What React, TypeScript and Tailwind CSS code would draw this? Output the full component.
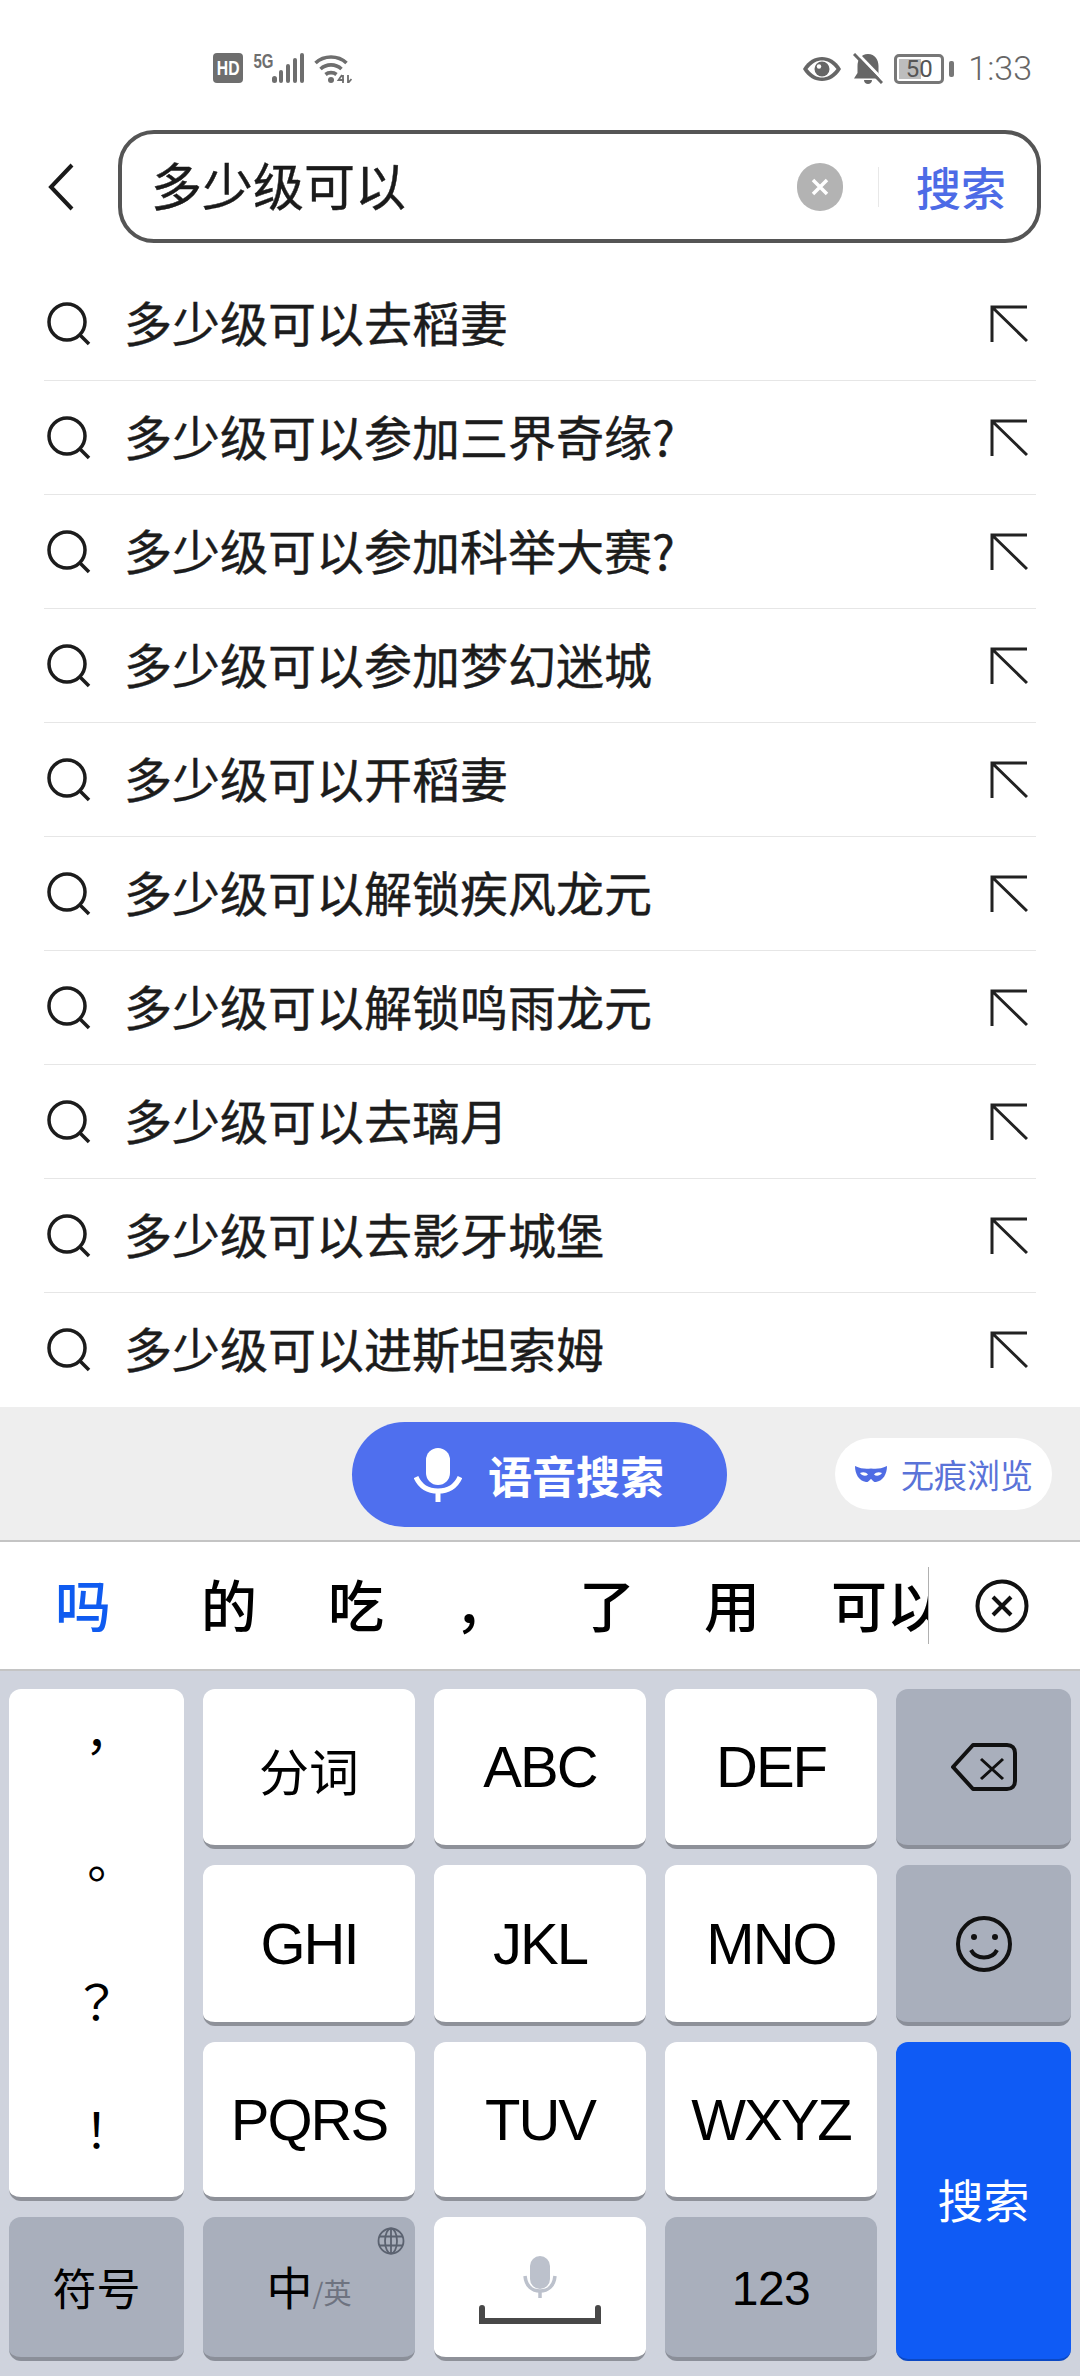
const cjk = "[font-family:'Noto_Sans_CJK_SC',sans-serif]"

const suggestions = [
  "多少级可以去稻妻",
  "多少级可以参加三界奇缘?",
  "多少级可以参加科举大赛?",
  "多少级可以参加梦幻迷城",
  "多少级可以开稻妻",
  "多少级可以解锁疾风龙元",
  "多少级可以解锁鸣雨龙元",
  "多少级可以去璃月",
  "多少级可以去影牙城堡",
  "多少级可以进斯坦索姆",
]

const candidates = [
  { text: "的", w: "w-[126px]" },
  { text: "吃", w: "w-[128px]" },
  { text: "，", w: "w-[125px]" },
  { text: "了", w: "w-[124px]" },
  { text: "用", w: "w-[126px]" },
]

function StatusBar() {
  return (
    <div className="flex h-[130px] justify-between pl-[213px] pr-[48px] pt-[53px]">
      <div className="flex h-[31px] items-start">
        <div className="flex h-[30px] w-[30px] items-center justify-center rounded-[4px] bg-[#6e6e6e] [font-family:'Liberation_Sans',sans-serif] text-[21px] font-bold text-white">
          <span className="scale-x-75">HD</span>
        </div>
        <span className="ml-[8px] w-[20px] scale-x-75 [font-family:'Liberation_Sans',sans-serif] text-[20px] leading-[17px] font-bold text-[#6e6e6e]">5G</span>
        <svg width="32" height="30" viewBox="0 0 32 30" className="ml-[1px]" fill="#6e6e6e">
          <rect x="0" y="23" width="5" height="7" rx="2.5" />
          <rect x="7" y="17" width="4" height="13" rx="2" />
          <rect x="14" y="11" width="4" height="19" rx="2" />
          <rect x="21" y="5" width="4" height="25" rx="2" />
          <rect x="28" y="0" width="4" height="30" rx="2" />
        </svg>
        <svg width="38" height="30" viewBox="0 0 38 30" className="ml-[10px]" fill="none" stroke="#6e6e6e" strokeWidth="3.6">
          <path d="M1.5 10C10 2 24 2 32.5 10" />
          <path d="M6.5 16C12.5 10.5 21.5 10.5 27.5 16" />
          <path d="M11.5 21.5C14.5 19 19.5 19 22.5 21.5" />
          <circle cx="17" cy="27" r="3" fill="#6e6e6e" stroke="none" />
          <path d="M28 22L24.5 27H30M29 22V30M34 22V30L37.5 26" strokeWidth="1.8" />
        </svg>
      </div>
      <div className="flex h-[31px] items-center">
        <svg width="38" height="24" viewBox="0 0 38 24">
          <path d="M0 12C5 3.5 12 0 19 0S33 3.500 38 12C33 20.500 26 24 19 24S5 20.500 0 12Z" fill="#666666" />
          <path d="M4.500 12C9 6 14 3.500 19 3.500S29 6 33.500 12C29 18 24 20.500 19 20.500S9 18 4.500 12Z" fill="#fff" />
          <circle cx="19" cy="12" r="7.500" fill="#666666" />
          <circle cx="16" cy="9.500" r="2.200" fill="#fff" />
        </svg>
        <svg width="30" height="31" viewBox="0 0 30 31" className="ml-[12px]">
          <path d="M15 1C8 1 4.500 7 4.500 13V20L1 25.500H29L25.500 20V13C25.500 7 22 1 15 1Z" fill="#666666" />
          <path d="M11 27H19C19 29.500 17 31 15 31S11 29.500 11 27Z" fill="#666666" />
          <path d="M3 -1L31 28" stroke="#fff" strokeWidth="3" />
          <path d="M1 1L29 30" stroke="#666666" strokeWidth="3" />
        </svg>
        <div className="relative ml-[11px] flex h-[30px] w-[50px] items-center justify-center rounded-[5px] border-[3px] border-[#777777] [font-family:'Roboto',sans-serif] text-[24px] text-[#555555]">
          <div className="absolute top-[2px] bottom-[2px] left-[2px] w-[22px] bg-[#bdbdbd]" />
          <span className="relative">50</span>
        </div>
        <div className="ml-[5px] h-[16px] w-[5px] rounded-[2px] bg-[#777777]" />
        <span className="ml-[14px] [font-family:'Roboto',sans-serif] text-[34px] font-light text-[#666666]">1:33</span>
      </div>
    </div>
  )
}

function SearchBar() {
  return (
    <div className="flex h-[137px] items-start pl-[48px]">
      <svg width="26" height="48" viewBox="0 0 26 48" className="mt-[33px]" fill="none" stroke="#1a1a1a" strokeWidth="4">
        <path d="M24 2L3 24L24 46" />
      </svg>
      <div className="ml-[44px] flex h-[113px] w-[923px] items-center rounded-[36px] border-[4px] border-[#555555] pl-[29px] pr-[31px]">
        <span className="pb-[5px] text-[51px] leading-none text-[#1a1a1a] [-webkit-text-stroke:0.4px_#1a1a1a]">多少级可以</span>
        <div className="ml-auto flex h-[48px] w-[46px] items-center justify-center rounded-full bg-[#b3b3b3]">
          <svg width="20" height="20" viewBox="0 0 20 20" stroke="#fff" strokeWidth="3.5">
            <path d="M3 3L17 17M17 3L3 17" />
          </svg>
        </div>
        <div className="ml-[35px] h-[40px] w-[1px] bg-[#e8e8e8]" />
        <span className="ml-[37px] pb-[1px] text-[45px] leading-none font-medium text-[#4d6be6]">搜索</span>
      </div>
    </div>
  )
}

function SuggestionRow({ text, last }: { text: string; last: boolean }) {
  return (
    <div className={`mx-[44px] flex h-[114px] items-center ${last ? "" : "border-b-[1px] border-[#e6e6e6]"}`}>
      <svg width="44" height="44" viewBox="0 0 44 44" className="ml-[3px] shrink-0" fill="none" stroke="#1c1c1c" strokeWidth="3.5">
        <circle cx="20" cy="20" r="18" />
        <path d="M33 33L42 42" />
      </svg>
      <span className="ml-[33px] pb-[6px] text-[48px] leading-none text-[#1c1c1c] [-webkit-text-stroke:0.4px_#1c1c1c]">{text}</span>
      <svg width="38" height="38" viewBox="0 0 38 38" className="mr-[8px] ml-auto shrink-0" fill="none" stroke="#222222" strokeWidth="3">
        <path d="M37 2H2V37M2 2L37 36" />
      </svg>
    </div>
  )
}

function ActionBand() {
  return (
    <div className="flex h-[135px] items-start border-b-[2px] border-[#c4c4c4] bg-[#eeeeee] pt-[15px] pl-[352px]">
      <div className="flex h-[105px] w-[375px] items-center rounded-full bg-[#4f6fee] pl-[62px] text-white">
        <svg width="48" height="54" viewBox="0 0 48 54" fill="none" stroke="#fff" strokeWidth="5">
          <rect x="12" y="0" width="24" height="37" rx="12" fill="#fff" stroke="none" />
          <path d="M2 29C6 38 14 43 24 43S42 38 46 29" />
          <path d="M24 43V54" />
        </svg>
        <span className="ml-[26px] text-[44px] leading-none font-bold">语音搜索</span>
      </div>
      <div className="mt-[16px] ml-[108px] flex h-[72px] w-[217px] items-center rounded-full bg-white pl-[20px]">
        <svg width="32" height="17" viewBox="0 0 32 17" className="shrink-0">
          <path
            fillRule="evenodd"
            fill="#4f6ce4"
            d="M0 0C6 3 11 3 16 2.500C21 3 26 3 32 0C32 8 28 15 21 16C18 16.500 17 13 16 13S14 16.500 11 16C4 15 0 8 0 0ZM5 7C7 10 11 10.500 13 8.500C11 6 8 5.500 5 7ZM27 7C25 10 21 10.500 19 8.500C21 6 24 5.500 27 7Z"
          />
        </svg>
        <span className="ml-[14px] text-[33px] leading-none whitespace-nowrap text-[#5a73d8]">无痕浏览</span>
      </div>
    </div>
  )
}

function CandidateBar() {
  return (
    <div className="flex h-[129px] items-center border-b-[2px] border-[#c4c4c4] bg-white text-[56px] leading-none font-medium text-black">
      <div className="flex h-full w-[928px] items-center overflow-hidden pb-[6px] whitespace-nowrap">
        <span className="w-[166px] shrink-0 text-center text-[#0f5bf0]">吗</span>
        {candidates.map((c) => (
          <span key={c.text} className={`${c.w} shrink-0 text-center`}>{c.text}</span>
        ))}
        <span className="ml-[36px] shrink-0">可以</span>
      </div>
      <div className="h-[77px] w-[1px] bg-[#b0b0b0]" />
      <svg width="54" height="54" viewBox="0 0 54 54" className="ml-[46px]" fill="none" stroke="#111111" strokeWidth="4">
        <circle cx="27" cy="27" r="24.500" />
        <path d="M18 18L36 36M36 18L18 36" />
      </svg>
    </div>
  )
}

const letterKey = "flex items-center justify-center rounded-[12px] border-b-[4px] border-[#8e9199] bg-white text-black"
const grayKey = "flex items-center justify-center rounded-[12px] border-b-[4px] border-[#8b8f99] bg-[#a9afbc] text-black"
const latin = "[font-family:'Liberation_Sans',sans-serif] text-[58px] leading-none tracking-[-2px]"

function Keyboard() {
  return (
    <div className="grid h-[705px] grid-cols-[175px_212px_212px_212px_175px] grid-rows-[160px_161px_159px_144px] gap-x-[19px] gap-y-[16px] bg-[#cfd3dd] pt-[18px] pl-[9px]">
      <div className="row-span-3 flex flex-col items-center justify-center gap-[80px] rounded-[12px] border-b-[4px] border-[#8e9199] bg-white pb-[16px] [font-family:'Noto_Sans_CJK_TC',sans-serif] text-[48px] leading-none text-black">
        <span>，</span>
        <span>。</span>
        <span>？</span>
        <span>！</span>
      </div>
      <div className={`${letterKey} pt-[4px] text-[50px] leading-none`}>分词</div>
      <div className={`${letterKey} ${latin}`}>ABC</div>
      <div className={`${letterKey} ${latin}`}>DEF</div>
      <div className={grayKey}>
        <svg width="66" height="48" viewBox="0 0 66 48" fill="none" stroke="#111111" strokeWidth="4">
          <path d="M22 2H56C61 2 64 5 64 10V38C64 43 61 46 56 46H22L2 24Z" strokeLinejoin="round" />
          <path d="M30 16L52 36M52 16L30 36" strokeWidth="3" />
        </svg>
      </div>
      <div className={`${letterKey} ${latin}`}>GHI</div>
      <div className={`${letterKey} ${latin}`}>JKL</div>
      <div className={`${letterKey} ${latin}`}>MNO</div>
      <div className={grayKey}>
        <svg width="56" height="58" viewBox="0 0 56 58" fill="none" stroke="#111111" strokeWidth="4">
          <circle cx="28" cy="29" r="26" />
          <circle cx="18" cy="22" r="3" fill="#111111" stroke="none" />
          <circle cx="39" cy="22" r="3" fill="#111111" stroke="none" />
          <path d="M15 35C20 45 36 45 41 35" />
        </svg>
      </div>
      <div className={`${letterKey} ${latin}`}>PQRS</div>
      <div className={`${letterKey} ${latin}`}>TUV</div>
      <div className={`${letterKey} ${latin}`}>WXYZ</div>
      <div className="row-span-2 flex items-center justify-center rounded-[12px] border-b-[2px] border-[#0b48c4] bg-[#0f5bf5] pb-[6px] text-[46px] leading-none text-white">搜索</div>
      <div className={`${grayKey} text-[44px] leading-none`}>符号</div>
      <div className={`${grayKey} relative pb-[5px] leading-none`}>
        <svg width="28" height="28" viewBox="0 0 28 28" className="absolute top-[10px] right-[10px]" fill="none" stroke="#5b6270" strokeWidth="1.800">
          <circle cx="14" cy="14" r="12.500" />
          <ellipse cx="14" cy="14" rx="6" ry="12.500" />
          <path d="M14 1.500V26.500M2 9.500H26M2 18.500H26" />
        </svg>
        <span className="text-[46px] text-black">中</span>
        <span className="mt-[14px] text-[28px] text-[#6e7380]">/英</span>
      </div>
      <div className={`${letterKey} flex-col`}>
        <svg width="122" height="70" viewBox="0 0 122 70" className="mt-[8px]" fill="none">
          <rect x="51" y="0" width="20" height="33" rx="10" fill="#bcc1cc" />
          <path d="M46 20C47 30 53 35 61 35S75 30 76 20" stroke="#bcc1cc" strokeWidth="3.500" />
          <path d="M61 35V42" stroke="#bcc1cc" strokeWidth="3.500" />
          <path d="M3 52V65H119V52" stroke="#484848" strokeWidth="6" strokeLinecap="round" />
        </svg>
      </div>
      <div className={`${grayKey} pt-[3px] [font-family:'Liberation_Sans',sans-serif] text-[48px] leading-none tracking-[-0.5px]`}>123</div>
    </div>
  )
}

export default function App() {
  return (
    <div className={`h-[2376px] w-[1080px] overflow-hidden bg-white ${cjk}`}>
      <StatusBar />
      <SearchBar />
      <div>
        {suggestions.map((s, i) => (
          <SuggestionRow key={s} text={s} last={i === suggestions.length - 1} />
        ))}
      </div>
      <ActionBand />
      <CandidateBar />
      <Keyboard />
    </div>
  )
}
